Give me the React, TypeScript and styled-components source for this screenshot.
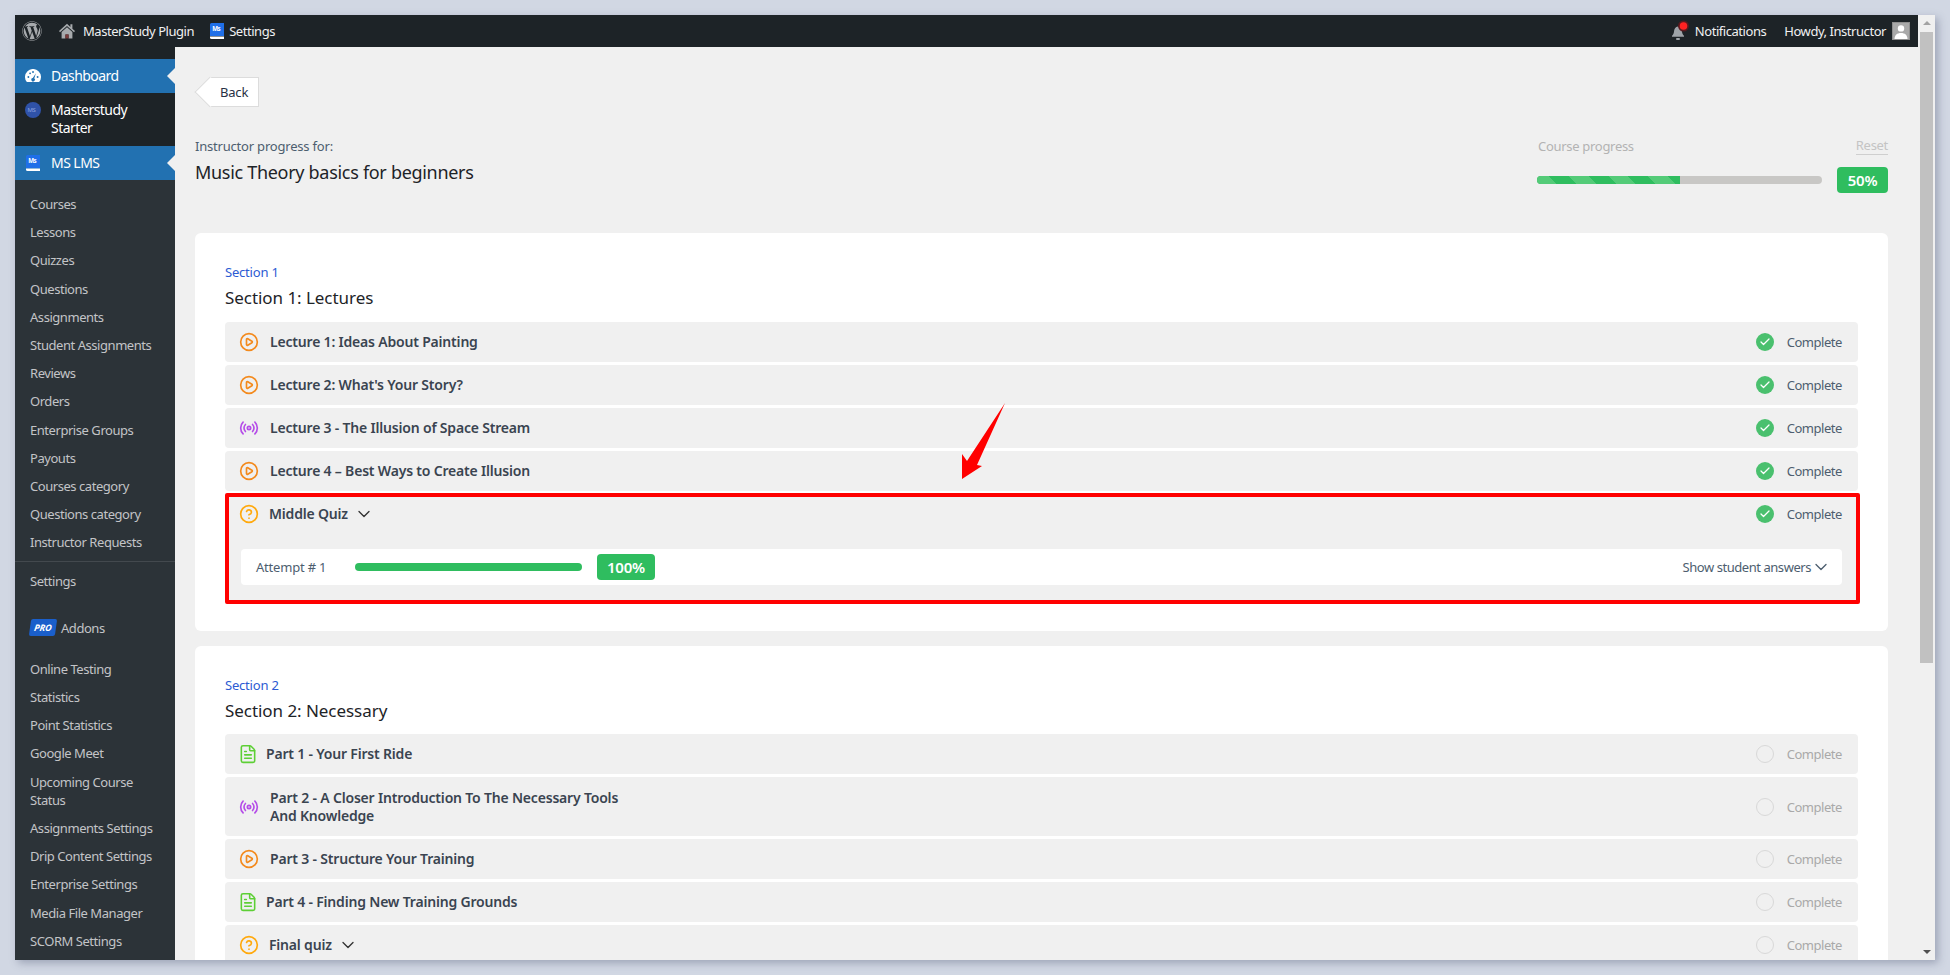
import React from 'react';
import styled, { createGlobalStyle } from 'styled-components';
import { ChevronDown, Check, CirclePlay, CircleHelp, FileText, Radio } from 'lucide-react';
import { FaWordpress } from 'react-icons/fa';

const GlobalStyle = createGlobalStyle`
  html, body {
    margin: 0;
    height: 100%;
    overflow: hidden;
    background: #d1d7e3;
  }
  * {
    box-sizing: border-box;
  }
  #root {
    height: 100%;
    padding: 15px;
    font-family: "Noto Sans", "Open Sans", sans-serif;
    font-size: 13px;
  }
`;

const Desktop = styled.div`
  display: flex;
  height: 945px;
  width: 1920px;
  overflow: hidden;
  background: #f0f0f0;
  box-shadow: 3px 3px 8px rgba(60, 70, 100, 0.35);
`;

const Page = styled.div`
  flex: 1;
  min-width: 0;
  display: flex;
  flex-direction: column;
`;

const AdminBar = styled.div`
  height: 32px;
  flex: none;
  background: #1d2327;
  color: #f0f0f1;
  display: flex;
  align-items: center;
  justify-content: space-between;
  padding: 0 8px 0 7px;
  letter-spacing: -0.45px;
`;

const BarGroup = styled.div`
  display: flex;
  align-items: center;
`;

const BarText = styled.span<{ $left?: number }>`
  margin-left: ${p => p.$left ?? 0}px;
  white-space: nowrap;
`;

const Avatar = styled.div`
  width: 18px;
  height: 18px;
  margin-left: 6px;
  background: #a9a9a9;
  border: 1px solid #8f8f8f;
`;

const Body = styled.div`
  flex: 1;
  min-height: 0;
  display: flex;
`;

const Sidebar = styled.nav`
  width: 160px;
  flex: none;
  background: #2c3338;
  color: #c3c4c7;
  letter-spacing: -0.45px;
`;

const TopMenu = styled.div`
  background: #1d2327;
  padding-top: 12px;
`;

const MainItem = styled.div<{ $active?: boolean; $tall?: boolean }>`
  position: relative;
  display: flex;
  align-items: ${p => (p.$tall ? 'flex-start' : 'center')};
  height: ${p => (p.$tall ? 53 : 34)}px;
  padding: ${p => (p.$tall ? '8px 10px 0 10px' : '0 10px')};
  background: ${p => (p.$active ? '#2271b1' : 'transparent')};
  color: #fff;
  font-size: 14px;
  line-height: 18px;
  letter-spacing: -0.55px;

  ${p =>
    p.$active &&
    `&::after {
      content: '';
      position: absolute;
      right: 0;
      top: 50%;
      margin-top: -8px;
      border: 8px solid transparent;
      border-right-color: #f0f0f0;
      border-left-width: 0;
    }`}
`;

const MainIcon = styled.span`
  width: 16px;
  height: 18px;
  flex: none;
  margin-right: 10px;
  display: flex;
  align-items: center;
  justify-content: center;
`;

const SubMenu = styled.div`
  padding-top: 10px;
`;

const SubItem = styled.div`
  padding: 5px 12px 5px 15px;
  line-height: 18.2px;
`;

const Divider = styled.div`
  height: 1px;
  margin: 4px 0 5px;
  background: #43494e;
`;

const AddonsRow = styled.div`
  display: flex;
  align-items: center;
  height: 28px;
  margin: 19px 0 13px;
  padding-left: 15px;
`;

const ProBadge = styled.span`
  width: 26px;
  height: 17px;
  margin-right: 5px;
  border-radius: 2px;
  background: #1a5fcb;
  color: #fff;
  font-size: 9px;
  font-style: italic;
  font-weight: 700;
  line-height: 17px;
  text-align: center;
  transform: skewX(-8deg);
  letter-spacing: 0;
`;

const Main = styled.main`
  flex: 1;
  min-width: 0;
  overflow: hidden;
  padding: 30px 30px 0 20px;
  color: #273044;
`;

const BackButton = styled.div`
  position: relative;
  width: 50px;
  height: 30px;
  margin-left: 14px;
  background: #fff;
  border: 1px solid #dcdcdc;
  border-left: none;
  font-size: 13px;
  line-height: 28px;
  padding-left: 11px;
  letter-spacing: -0.2px;

  &::before {
    content: '';
    position: absolute;
    left: -10px;
    top: 3px;
    width: 21px;
    height: 21px;
    background: #fff;
    border-left: 1px solid #dcdcdc;
    border-bottom: 1px solid #dcdcdc;
    transform: rotate(45deg);
  }

  & > span {
    position: relative;
  }
`;

const CourseHead = styled.div`
  display: flex;
  justify-content: space-between;
  margin-top: 29px;
  height: 97px;
`;

const Kicker = styled.div`
  font-size: 13px;
  line-height: 20px;
  color: #4d5e6f;
  letter-spacing: -0.2px;
`;

const CourseTitle = styled.div`
  margin-top: 6px;
  font-size: 18px;
  line-height: 20px;
  color: #1d2327;
  letter-spacing: -0.3px;
`;

const ProgressBox = styled.div`
  width: 351px;
`;

const ProgressHead = styled.div`
  display: flex;
  justify-content: space-between;
  color: #b3b3b3;
  line-height: 20px;
  letter-spacing: -0.3px;
  padding-left: 1px;
`;

const Reset = styled.span`
  color: #c4c4c4;
  border-bottom: 1px solid #cfcfcf;
  height: 19px;
  line-height: 18px;
`;

const ProgressRow = styled.div`
  display: flex;
  align-items: center;
  justify-content: space-between;
  margin-top: 11px;
`;

const Track = styled.div<{ $width: number; $bg: string }>`
  width: ${p => p.$width}px;
  height: 8px;
  border-radius: 4px;
  overflow: hidden;
  background: ${p => p.$bg};
`;

const Fill = styled.div<{ $striped?: boolean }>`
  height: 100%;
  background-color: #2fbd5f;
  background-image: ${p =>
    p.$striped
      ? 'repeating-linear-gradient(45deg, #54cb78 0 14px, #2fbd5f 14px 28px)'
      : 'none'};
`;

const Badge = styled.div<{ $width: number }>`
  width: ${p => p.$width}px;
  height: 26px;
  border-radius: 4px;
  background: #2fbd5f;
  color: #fff;
  font-size: 15px;
  font-weight: 600;
  line-height: 26px;
  text-align: center;
  letter-spacing: -0.2px;
`;

const Card = styled.section`
  background: #fff;
  border-radius: 6px;
  padding: 30px 30px 28px;
  margin-bottom: 15px;
`;

const SectionLabel = styled.div`
  color: #2c5bd3;
  font-size: 13px;
  line-height: 18px;
  letter-spacing: -0.2px;
`;

const SectionTitle = styled.h2`
  margin: 5px 0 0;
  font-size: 17px;
  font-weight: 400;
  line-height: 24px;
  color: #1d2327;
  letter-spacing: -0.05px;
`;

const Rows = styled.div<{ $top: number }>`
  margin-top: ${p => p.$top}px;
  display: flex;
  flex-direction: column;
  gap: 3px;
`;

const Row = styled.div<{ $tall?: boolean }>`
  display: flex;
  align-items: center;
  height: ${p => (p.$tall ? 59 : 40)}px;
  padding: 0 16px;
  border-radius: 4px;
  background: #f0f0f0;
`;

const QuizBlock = styled.div`
  position: relative;
  background: #f0f0f0;
  height: 109px;
  border-radius: 4px;
  display: flex;
  flex-direction: column;
`;

const Outline = styled.div`
  position: absolute;
  inset: -1px -2px -1px 0;
  border: 4px solid #ff0000;
  border-radius: 2px;
  pointer-events: none;
`;

const IconSlot = styled.span<{ $gap: number; $inset: number; $color: string }>`
  display: flex;
  flex: none;
  margin-left: ${p => p.$inset}px;
  margin-right: ${p => p.$gap}px;
  color: ${p => p.$color};
`;

const RowTitle = styled.div`
  max-width: 370px;
  font-size: 14px;
  font-weight: 600;
  line-height: 18px;
  color: #3a4450;
  letter-spacing: -0.19px;
`;

const Chevron = styled.span`
  display: flex;
  margin-left: 6px;
  color: #333;
`;

const Status = styled.div<{ $done: boolean }>`
  margin-left: auto;
  display: flex;
  align-items: center;
  gap: 13px;
  color: ${p => (p.$done ? '#4d5e6f' : '#a9a9a9')};
  letter-spacing: -0.45px;
`;

const Tick = styled.span<{ $done: boolean }>`
  width: 18px;
  height: 18px;
  border-radius: 50%;
  display: flex;
  align-items: center;
  justify-content: center;
  color: #fff;
  background: ${p => (p.$done ? '#4ac06e' : 'transparent')};
  border: ${p => (p.$done ? 'none' : '1px solid #d8d8d8')};
`;

const AttemptPanel = styled.div`
  display: flex;
  align-items: center;
  height: 36px;
  margin: 15px 16px 0;
  padding: 0 16px 0 15px;
  border-radius: 4px;
  background: #fff;
`;

const AttemptLabel = styled.span`
  width: 99px;
  color: #4d5e6f;
  letter-spacing: -0.2px;
`;

const BadgeGap = styled.div`
  margin-left: 15px;
`;

const AnswersLink = styled.div`
  margin-left: auto;
  margin-right: -5px;
  display: flex;
  align-items: center;
  color: #4d5e6f;
  letter-spacing: -0.45px;
`;

const Arrow = styled.svg`
  position: absolute;
  left: 962px;
  top: 403px;
`;

const Scrollbar = styled.div`
  width: 17px;
  flex: none;
  background: #f0f0f0;
  display: flex;
  flex-direction: column;
  align-items: center;
  position: relative;
`;

const ScrollArrow = styled.span<{ $down?: boolean }>`
  margin-top: ${p => (p.$down ? 'auto' : '6px')};
  margin-bottom: ${p => (p.$down ? '6px' : '0')};
  border: 4px solid transparent;
  ${p => (p.$down ? 'border-top: 4px solid #505050; border-bottom: 0;' : 'border-bottom: 4px solid #a3a3a3; border-top: 0;')}
`;

const Thumb = styled.div`
  position: absolute;
  top: 17px;
  left: 2px;
  width: 13px;
  height: 631px;
  background: #c1c1c1;
`;

function MsBook({ size = 16 }: { size?: number }) {
  return (
    <svg width={size} height={size} viewBox="0 0 16 16">
      <path d="M1 1.5A1.5 1.5 0 0 1 2.5 0H15v13H1z" fill="#1f6fe8" />
      <path d="M1 13.4h14V16H2.6A1.6 1.6 0 0 1 1 14.4z" fill="#fff" />
      <text x="3.2" y="8" fontSize="6.2" fontWeight="700" fill="#fff" fontFamily="Noto Sans">
        Ms
      </text>
    </svg>
  );
}

function HomeIcon() {
  return (
    <svg width="16" height="16" viewBox="0 0 16 16">
      <path d="M8 .8 0 8l1 1.2L8 3l7 6.2L16 8l-2.6-2.3V1.2h-2v2.7z" fill="#a7aaad" />
      <path d="M2.6 9 8 4.2 13.4 9v6.4H9.6v-4H6.4v4H2.6z" fill="#a7aaad" />
      <rect x="6.4" y="11.4" width="3.2" height="4" fill="#7a3b3b" />
    </svg>
  );
}

function BellIcon() {
  return (
    <svg width="18" height="22" viewBox="0 0 18 22">
      <path d="M7 6.5c-2.8.4-3.8 2.6-4 5-.1 2-.9 3.2-2 4.2v1h12v-1c-1.1-1-1.9-2.2-2-4.2-.2-2.4-1.2-4.6-4-5z" fill="#9ea3a8" />
      <rect x="5" y="18" width="4" height="2" rx="1" fill="#9ea3a8" />
      <circle cx="12.5" cy="6" r="5.5" fill="#5a1a1f" />
      <circle cx="12.5" cy="6" r="3.8" fill="#ff2222" />
    </svg>
  );
}

function AvatarIcon() {
  return (
    <Avatar>
      <svg width="16" height="16" viewBox="0 0 16 16">
        <circle cx="8" cy="5.4" r="3.2" fill="#fff" />
        <path d="M1.5 16c.3-4 2.4-6 6.5-6s6.2 2 6.5 6z" fill="#fff" />
      </svg>
    </Avatar>
  );
}

function DashboardIcon() {
  return (
    <svg width="17" height="14" viewBox="0 0 17 14">
      <path d="M2 13.5A8.5 8.5 0 1 1 15 13.5z" fill="#fff" />
      <circle cx="3.6" cy="8" r="1" fill="#2271b1" />
      <circle cx="5.4" cy="4.2" r="1" fill="#2271b1" />
      <circle cx="8.5" cy="2.8" r="1" fill="#2271b1" />
      <circle cx="13.4" cy="8" r="1" fill="#2271b1" />
      <path d="M11.6 4 9.9 9.4a1.9 1.9 0 1 1-1.6-.4z" fill="#2271b1" />
    </svg>
  );
}

function StarterIcon() {
  return (
    <svg width="16" height="16" viewBox="0 0 16 16">
      <circle cx="8" cy="8" r="8" fill="#2f52a8" />
      <text x="2.5" y="10" fontSize="6" fill="#8aa4e0" fontFamily="Noto Sans">
        MS
      </text>
    </svg>
  );
}

type Kind = 'video' | 'stream' | 'quiz' | 'text';

const kindIcon: Record<Kind, { color: string; inset: number; gap: number; node: React.ReactNode }> = {
  video: { color: '#f38a1d', inset: -2, gap: 11, node: <CirclePlay size={20} strokeWidth={2} /> },
  stream: { color: '#b54de8', inset: -2, gap: 11, node: <Radio size={20} strokeWidth={2} /> },
  quiz: { color: '#ffa90d', inset: -2, gap: 10, node: <CircleHelp size={20} strokeWidth={2} /> },
  text: { color: '#5dcf35', inset: -3, gap: 8, node: <FileText size={20} strokeWidth={1.9} /> },
};

function LessonIcon({ kind }: { kind: Kind }) {
  const k = kindIcon[kind];
  return (
    <IconSlot $gap={k.gap} $inset={k.inset} $color={k.color}>
      {k.node}
    </IconSlot>
  );
}

function StatusCell({ done }: { done: boolean }) {
  return (
    <Status $done={done}>
      <Tick $done={done}>{done && <Check size={12} strokeWidth={2.5} />}</Tick>
      Complete
    </Status>
  );
}

function Lesson({ kind, title, done, tall, caret }: { kind: Kind; title: React.ReactNode; done: boolean; tall?: boolean; caret?: boolean }) {
  return (
    <Row $tall={tall}>
      <LessonIcon kind={kind} />
      <RowTitle>{title}</RowTitle>
      {caret && (
        <Chevron>
          <ChevronDown size={20} strokeWidth={1.6} />
        </Chevron>
      )}
      <StatusCell done={done} />
    </Row>
  );
}

const subTop = ['Courses', 'Lessons', 'Quizzes', 'Questions', 'Assignments', 'Student Assignments', 'Reviews', 'Orders', 'Enterprise Groups', 'Payouts', 'Courses category', 'Questions category', 'Instructor Requests'];
const subAddons = ['Online Testing', 'Statistics', 'Point Statistics', 'Google Meet', 'Upcoming Course Status', 'Assignments Settings', 'Drip Content Settings', 'Enterprise Settings', 'Media File Manager', 'SCORM Settings'];

export default function App() {
  return (
    <>
      <GlobalStyle />
      <Desktop>
        <Page>
          <AdminBar>
            <BarGroup>
              <FaWordpress size={20} color="#a7aaad" />
              <BarText $left={17} />
              <HomeIcon />
              <BarText $left={8}>MasterStudy Plugin</BarText>
              <BarText $left={15} />
              <MsBook />
              <BarText $left={4}>Settings</BarText>
            </BarGroup>
            <BarGroup>
              <BellIcon />
              <BarText $left={6}>Notifications</BarText>
              <BarText $left={18}>Howdy, Instructor</BarText>
              <AvatarIcon />
            </BarGroup>
          </AdminBar>
          <Body>
            <Sidebar>
              <TopMenu>
                <MainItem $active>
                  <MainIcon>
                    <DashboardIcon />
                  </MainIcon>
                  Dashboard
                </MainItem>
                <MainItem $tall>
                  <MainIcon>
                    <StarterIcon />
                  </MainIcon>
                  Masterstudy Starter
                </MainItem>
                <MainItem $active>
                  <MainIcon>
                    <MsBook />
                  </MainIcon>
                  MS LMS
                </MainItem>
              </TopMenu>
              <SubMenu>
                {subTop.map(s => (
                  <SubItem key={s}>{s}</SubItem>
                ))}
                <Divider />
                <SubItem>Settings</SubItem>
                <AddonsRow>
                  <ProBadge>PRO</ProBadge>
                  Addons
                </AddonsRow>
                {subAddons.map(s => (
                  <SubItem key={s}>{s}</SubItem>
                ))}
              </SubMenu>
            </Sidebar>
            <Main>
              <BackButton>
                <span>Back</span>
              </BackButton>
              <CourseHead>
                <div>
                  <Kicker>Instructor progress for:</Kicker>
                  <CourseTitle>Music Theory basics for beginners</CourseTitle>
                </div>
                <ProgressBox>
                  <ProgressHead>
                    <span>Course progress</span>
                    <Reset>Reset</Reset>
                  </ProgressHead>
                  <ProgressRow>
                    <Track $width={285} $bg="#c8c7c5">
                      <Fill $striped style={{ width: '50%' }} />
                    </Track>
                    <Badge $width={51}>50%</Badge>
                  </ProgressRow>
                </ProgressBox>
              </CourseHead>
              <Card>
                <SectionLabel>Section 1</SectionLabel>
                <SectionTitle>Section 1: Lectures</SectionTitle>
                <Rows $top={12}>
                  <Lesson kind="video" title="Lecture 1: Ideas About Painting" done />
                  <Lesson kind="video" title="Lecture 2: What's Your Story?" done />
                  <Lesson kind="stream" title="Lecture 3 - The Illusion of Space Stream" done />
                  <Lesson kind="video" title="Lecture 4 – Best Ways to Create Illusion" done />
                  <QuizBlock>
                    <Lesson kind="quiz" title="Middle Quiz" done caret />
                    <AttemptPanel>
                      <AttemptLabel>Attempt # 1</AttemptLabel>
                      <Track $width={227} $bg="#2fbd5f">
                        <Fill style={{ width: '100%' }} />
                      </Track>
                      <BadgeGap>
                        <Badge $width={58}>100%</Badge>
                      </BadgeGap>
                      <AnswersLink>
                        Show student answers
                        <ChevronDown size={20} strokeWidth={1.6} />
                      </AnswersLink>
                    </AttemptPanel>
                    <Outline />
                  </QuizBlock>
                </Rows>
              </Card>
              <Card>
                <SectionLabel>Section 2</SectionLabel>
                <SectionTitle>Section 2: Necessary</SectionTitle>
                <Rows $top={11}>
                  <Lesson kind="text" title="Part 1 - Your First Ride" done={false} />
                  <Lesson kind="stream" title="Part 2 - A Closer Introduction To The Necessary Tools And Knowledge" done={false} tall />
                  <Lesson kind="video" title="Part 3 - Structure Your Training" done={false} />
                  <Lesson kind="text" title="Part 4 - Finding New Training Grounds" done={false} />
                  <Lesson kind="quiz" title="Final quiz" done={false} caret />
                </Rows>
              </Card>
            </Main>
          </Body>
        </Page>
        <Scrollbar>
          <ScrollArrow />
          <Thumb />
          <ScrollArrow $down />
        </Scrollbar>
      </Desktop>
      <Arrow width="44" height="77" viewBox="0 0 44 77">
        <polygon points="43,0 15,62 20,63 0,76 0,51 5,58" fill="#ff0000" />
      </Arrow>
    </>
  );
}
